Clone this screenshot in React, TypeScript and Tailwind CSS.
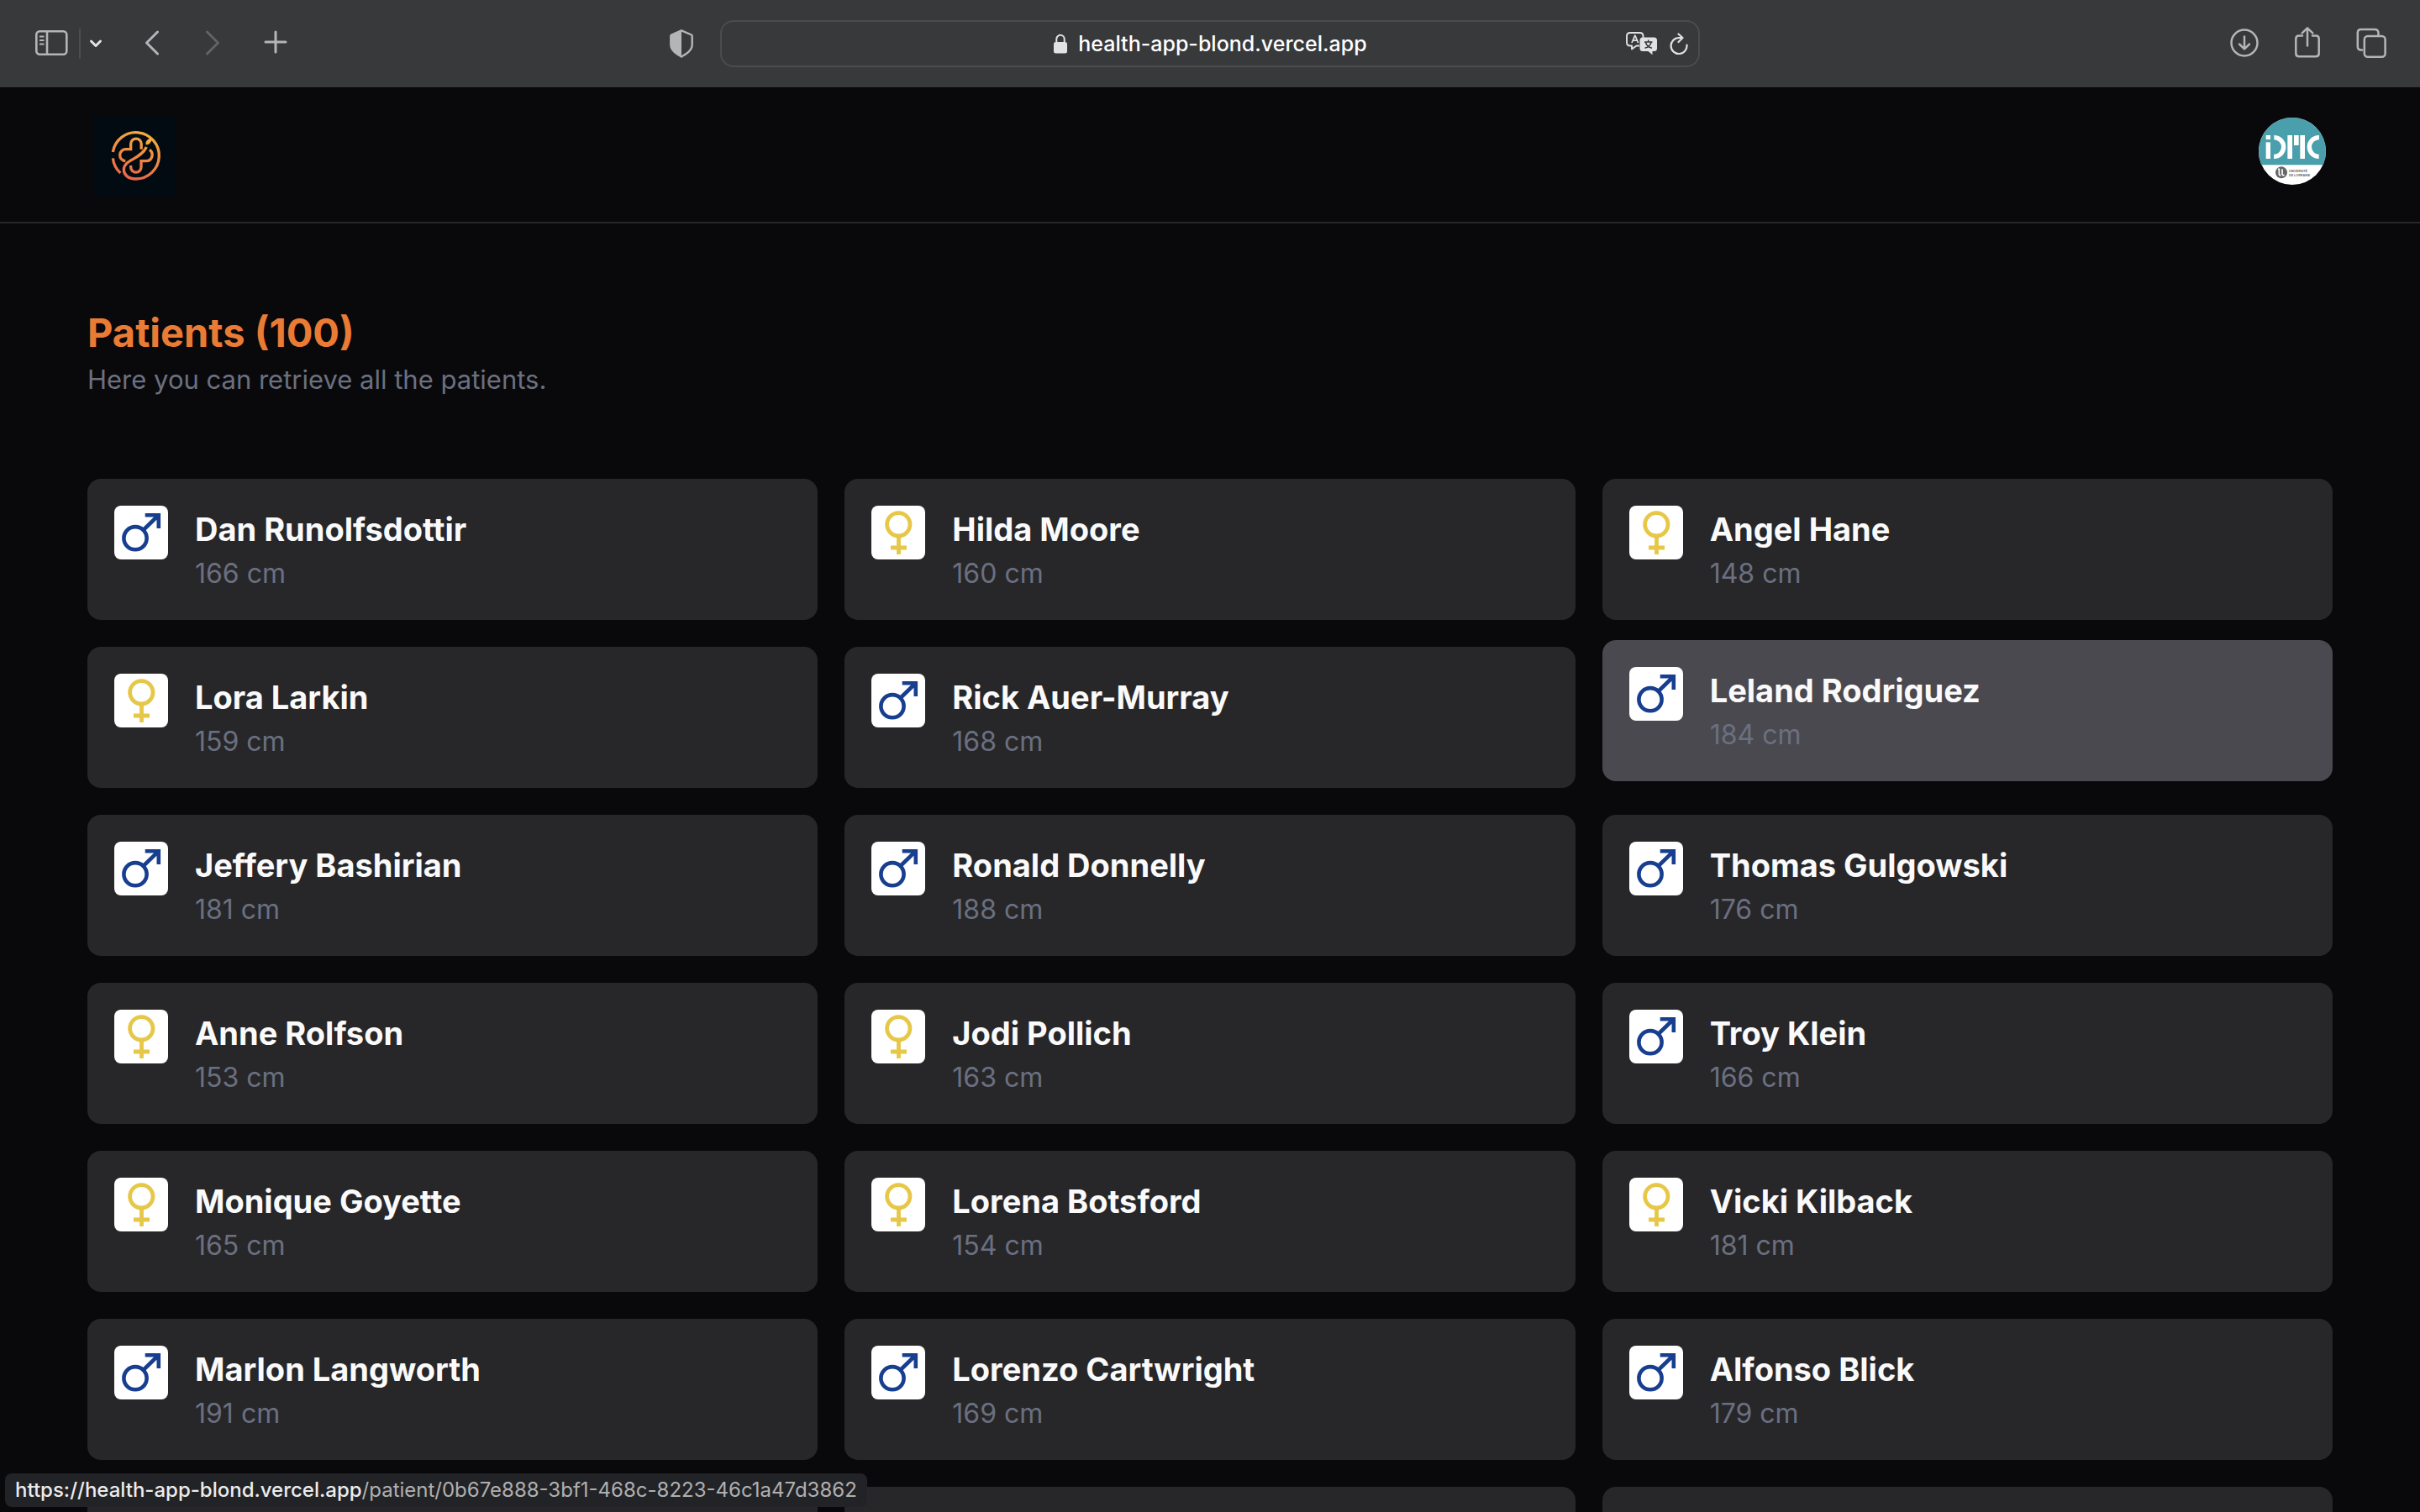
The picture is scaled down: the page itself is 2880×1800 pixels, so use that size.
import React from "react";

type Patient = { name: string; height: number; sex: "male" | "female"; active?: boolean };

const patients: Patient[] = [
  { name: "Dan Runolfsdottir", height: 166, sex: "male" },
  { name: "Hilda Moore", height: 160, sex: "female" },
  { name: "Angel Hane", height: 148, sex: "female" },
  { name: "Lora Larkin", height: 159, sex: "female" },
  { name: "Rick Auer-Murray", height: 168, sex: "male" },
  { name: "Leland Rodriguez", height: 184, sex: "male", active: true },
  { name: "Jeffery Bashirian", height: 181, sex: "male" },
  { name: "Ronald Donnelly", height: 188, sex: "male" },
  { name: "Thomas Gulgowski", height: 176, sex: "male" },
  { name: "Anne Rolfson", height: 153, sex: "female" },
  { name: "Jodi Pollich", height: 163, sex: "female" },
  { name: "Troy Klein", height: 166, sex: "male" },
  { name: "Monique Goyette", height: 165, sex: "female" },
  { name: "Lorena Botsford", height: 154, sex: "female" },
  { name: "Vicki Kilback", height: 181, sex: "female" },
  { name: "Marlon Langworth", height: 191, sex: "male" },
  { name: "Lorenzo Cartwright", height: 169, sex: "male" },
  { name: "Alfonso Blick", height: 179, sex: "male" },
];

function MaleIcon() {
  return (
    <svg viewBox="0 0 64 64" className="size-16 shrink-0 rounded-lg bg-white" fill="none" stroke="#173e8f" strokeWidth="4.6" aria-label="Male" role="img">
      <circle cx="25" cy="38.7" r="13.6" />
      <path d="M35 28.5 52.5 11.5M36.7 11.2H52.8V27" />
    </svg>
  );
}

function FemaleIcon() {
  return (
    <svg viewBox="0 0 64 64" className="size-16 shrink-0 rounded-lg bg-white" fill="none" stroke="#e6c748" strokeWidth="4.8" aria-label="Female" role="img">
      <circle cx="32.3" cy="22.3" r="13.7" />
      <path d="M32.5 36V58M23 50H42" />
    </svg>
  );
}

function Logo() {
  return (
    <svg viewBox="0 0 288 288" className="size-24 bg-[#020b12]" fill="none" stroke="url(#logo-warm)" strokeWidth="10" strokeLinecap="butt" aria-hidden="true">
      <defs>
        <linearGradient id="logo-warm" gradientUnits="userSpaceOnUse" x1="180" y1="60" x2="130" y2="232">
          <stop offset="0" stopColor="#f5ab3d" />
          <stop offset="0.5" stopColor="#f28a42" />
          <stop offset="1" stopColor="#ec6347" />
        </linearGradient>
      </defs>
      <path d="M67 132A83 83 0 1 1 149 228C120 228 106 212 106 195C106 158 165 160 187 114" />
      <path d="M67 154A84 84 0 0 0 94 207" />
      <path d="M112 164A21 21 0 0 1 114 122H131V103A18.500 18.500 0 0 1 168.500 103V122" />
      <path d="M198 124A22 22 0 0 1 186 164H168V186A18.500 18.500 0 0 1 131 186V180" />
      <path d="M185 106C182 92 192 84 209 80C205 94 200 106 185 106Z" fill="#f5ab3d" stroke="none" />
    </svg>
  );
}

function Avatar() {
  return (
    <svg viewBox="0 0 240 240" className="size-20 rounded-full bg-white" aria-hidden="true">
      <rect width="240" height="169" fill="#4a9fac" />
      <g fill="#fff">
        <rect x="26" y="63" width="16" height="15" />
        <rect x="26" y="88" width="16" height="59" />
        <rect x="103" y="63" width="17" height="84" />
        <rect x="126" y="63" width="17" height="36" />
        <rect x="148" y="63" width="17" height="84" />
      </g>
      <g fill="none" stroke="#fff" strokeWidth="16" strokeDasharray="106.800 106.800">
        <circle cx="55" cy="105" r="34" transform="rotate(-90 55 105)" />
        <circle cx="215" cy="105" r="34" transform="rotate(90 215 105)" />
      </g>
      <circle cx="81" cy="196" r="21" fill="#666" />
      <g fill="none" stroke="#fff" strokeWidth="5">
        <path d="M69 184H73V200Q73 206 79 206M84 184V200Q84 206 92 206" />
      </g>
      <g fill="#666" fontFamily="Liberation Sans" fontWeight="700" fontSize="11">
        <text x="108" y="195">UNIVERSITÉ</text>
        <text x="108" y="209">DE LORRAINE</text>
      </g>
    </svg>
  );
}

function Toolbar() {
  return (
    <div className="grid h-[105px] shrink-0 grid-cols-[1fr_minmax(0,1166px)_1fr] items-center border-b border-black bg-[#38393b] text-[#b4b5b7]">
      <div className="flex items-center pl-[41px]">
        <button aria-label="Show sidebar">
          <svg width="40" height="32" viewBox="0 0 40 32" fill="none" stroke="currentColor" strokeWidth="2.600">
            <rect x="2.300" y="1.300" width="36" height="27.500" rx="4" />
            <path d="M15 1V29" />
            <path d="M6 7.500H11.500M6 12H11.500M6 16.500H11.500" strokeWidth="1.800" />
          </svg>
        </button>
        <span className="ml-[13px] h-9 w-0.5 bg-[#4c4d4f]" />
        <button aria-label="Tab groups" className="ml-2.5 text-[#e4e4e5]">
          <svg width="16" height="12" viewBox="0 0 16 12" fill="none" stroke="currentColor" strokeWidth="3" strokeLinecap="round" strokeLinejoin="round">
            <path d="M2.500 3 8 8.500 13.500 3" />
          </svg>
        </button>
        <button aria-label="Back" className="ml-[50px]">
          <svg width="18" height="32" viewBox="0 0 18 32" fill="none" stroke="currentColor" strokeWidth="3" strokeLinecap="round" strokeLinejoin="round">
            <path d="M15.500 2 2.500 15 15.500 28" />
          </svg>
        </button>
        <button aria-label="Forward" disabled className="ml-[54px] text-[#626365]">
          <svg width="18" height="32" viewBox="0 0 18 32" fill="none" stroke="currentColor" strokeWidth="3" strokeLinecap="round" strokeLinejoin="round">
            <path d="M2.500 2 15.500 15 2.500 28" />
          </svg>
        </button>
        <button aria-label="New tab" className="mb-1 ml-[51px]">
          <svg width="30" height="30" viewBox="0 0 30 30" fill="none" stroke="currentColor" strokeWidth="3" strokeLinecap="round">
            <path d="M15 3V27M3 15H27" />
          </svg>
        </button>
        <button aria-label="Privacy report" className="mr-8 ml-auto">
          <svg width="28" height="34" viewBox="0 0 28 34">
            <path d="M14 1.300 26 6.500Q26.700 6.800 26.700 8V18C26.700 25 20 29 14 32.500C8 29 1.300 25 1.300 18V8Q1.300 6.800 2 6.500Z" fill="none" stroke="currentColor" strokeWidth="2.400" />
            <path d="M14 1V33C7 29 1 25 1 18V7L14 1Z" fill="currentColor" />
          </svg>
        </button>
      </div>

      <div className="grid h-14 grid-cols-[1fr_auto_1fr] items-center rounded-2xl border-2 border-[#4b4c4e] px-3">
        <span />
        <label className="flex items-center gap-3">
          <svg width="18" height="24" viewBox="0 0 18 24" fill="none" aria-label="Secure" role="img">
            <rect x="1" y="10" width="16" height="13.500" rx="2.500" fill="#e2e2e3" />
            <path d="M4.300 11V6.500a4.700 4.700 0 0 1 9.400 0V11" stroke="#e2e2e3" strokeWidth="2" />
          </svg>
          <input aria-label="Address" readOnly value="health-app-blond.vercel.app" className="field-sizing-content bg-transparent text-[25px] leading-8 font-medium text-white outline-none" />
        </label>
        <div className="flex items-center justify-end gap-3.5 text-[#e2e2e3]">
          <button aria-label="Translate page">
            <svg width="38" height="28" viewBox="0 0 38 28" fill="none" stroke="currentColor" strokeLinejoin="round">
              <path d="M16 16.500H12.500L7 20.500V16.500H5Q1 16.500 1 12.500V5Q1 1 5 1H16.500Q20.500 1 20.500 5V7" strokeWidth="1.900" />
              <path d="M7 13 10.800 4.200 14.600 13M8.300 10.200H13.300" strokeWidth="1.700" />
              <path d="M20 6.500H33.500Q37 6.500 37 10V19.500Q37 23 33.500 23H31.500V27.300L26.500 23H20Q16.500 23 16.500 19.500V10Q16.500 6.500 20 6.500Z" fill="currentColor" stroke="none" />
              <path d="M22 12H31.500M26.700 9.500V12M23.500 12.500C24.500 16 27.500 18.500 31 19.300M30 12.500C29 16 26 18.500 22.500 19.300" stroke="#38393b" strokeWidth="1.600" />
            </svg>
          </button>
          <button aria-label="Reload page">
            <svg width="22" height="27" viewBox="0 0 22 27" fill="none" stroke="currentColor" strokeWidth="2.200" strokeLinecap="round" strokeLinejoin="round">
              <path d="M20.500 14.500A9.500 9.500 0 1 1 11 6H15.500M10.500 1.500 15.500 6 10.500 11" />
            </svg>
          </button>
        </div>
      </div>

      <div className="flex items-center justify-end gap-[43px] pr-10 pb-0.5">
        <button aria-label="Downloads">
          <svg width="34" height="38" viewBox="0 0 34 38" fill="none" stroke="currentColor" strokeWidth="2.500" strokeLinecap="round" strokeLinejoin="round">
            <circle cx="17" cy="19" r="15.500" />
            <path d="M17 11.500V26M11 20.500 17 26.300 23 20.500" />
          </svg>
        </button>
        <button aria-label="Share">
          <svg width="30" height="38" viewBox="0 0 30 38" fill="none" stroke="currentColor" strokeWidth="2.500" strokeLinecap="round" strokeLinejoin="round">
            <path d="M9 10.500H5Q1.300 10.500 1.300 14.200V31.500Q1.300 35.200 5 35.200H25Q28.700 35.200 28.700 31.500V14.200Q28.700 10.500 25 10.500H21" />
            <path d="M15 22.500V1.500M8.700 7.300 15 1.300 21.300 7.300" />
          </svg>
        </button>
        <button aria-label="Tab overview">
          <svg width="36" height="38" viewBox="0 0 36 38" fill="none" stroke="currentColor" strokeWidth="2.500">
            <path d="M8 27.500H6Q1.800 27.500 1.800 23.500V7Q1.800 3 5.800 3H22Q26.500 3 26.500 7.500V10.500" />
            <rect x="9.800" y="11" width="24.800" height="24.800" rx="4" />
          </svg>
        </button>
      </div>
    </div>
  );
}

function PatientCard({ patient }: { patient: Patient }) {
  return (
    <a
      href="#patient"
      className={
        patient.active
          ? "flex -translate-y-2 items-start gap-8 rounded-2xl bg-[#4a494f] p-8"
          : "flex items-start gap-8 rounded-2xl bg-[#27272a] p-8"
      }
    >
      {patient.sex === "male" ? <MaleIcon /> : <FemaleIcon />}
      <div>
        <h2 className="mb-0.5 text-[38px] leading-14 font-bold text-zinc-50">{patient.name}</h2>
        <p className="text-[32px] leading-[46px] text-[#6b7080]">{patient.height} cm</p>
      </div>
    </a>
  );
}

export default function App() {
  return (
    <div className="flex h-screen flex-col overflow-hidden bg-[#09090b] font-['Inter',sans-serif]">
      <Toolbar />
      <header className="flex h-[161px] shrink-0 items-center justify-between border-b-2 border-[#27272a] px-28">
        <a href="#home" aria-label="Home">
          <Logo />
        </a>
        <button aria-label="Account" className="mb-2.5">
          <Avatar />
        </button>
      </header>
      <main className="min-h-0 flex-1 overflow-hidden px-[104px] pt-[106px]">
        <h1 className="text-[47px] leading-12 font-bold text-[#e97b35]">Patients (100)</h1>
        <p className="mt-2 text-[31px] leading-12 text-[#6b7080]">Here you can retrieve all the patients.</p>
        <ul className="mt-[94px] grid grid-cols-3 gap-8">
          {patients.map((patient) => (
            <li key={patient.name}>
              <PatientCard patient={patient} />
            </li>
          ))}
          {[0, 1, 2].map((slot) => (
            <li key={slot} className="h-42 rounded-2xl bg-[#27272a]" />
          ))}
        </ul>
      </main>
      <div className="fixed bottom-1.5 left-1.5 rounded-lg bg-[#222326] px-3 text-2xl leading-10 text-[#b0b0b1]">
        <span className="font-medium text-[#ececec]">https://health-app-blond.vercel.app</span>/patient/0b67e888-3bf1-468c-8223-46c1a47d3862
      </div>
    </div>
  );
}
